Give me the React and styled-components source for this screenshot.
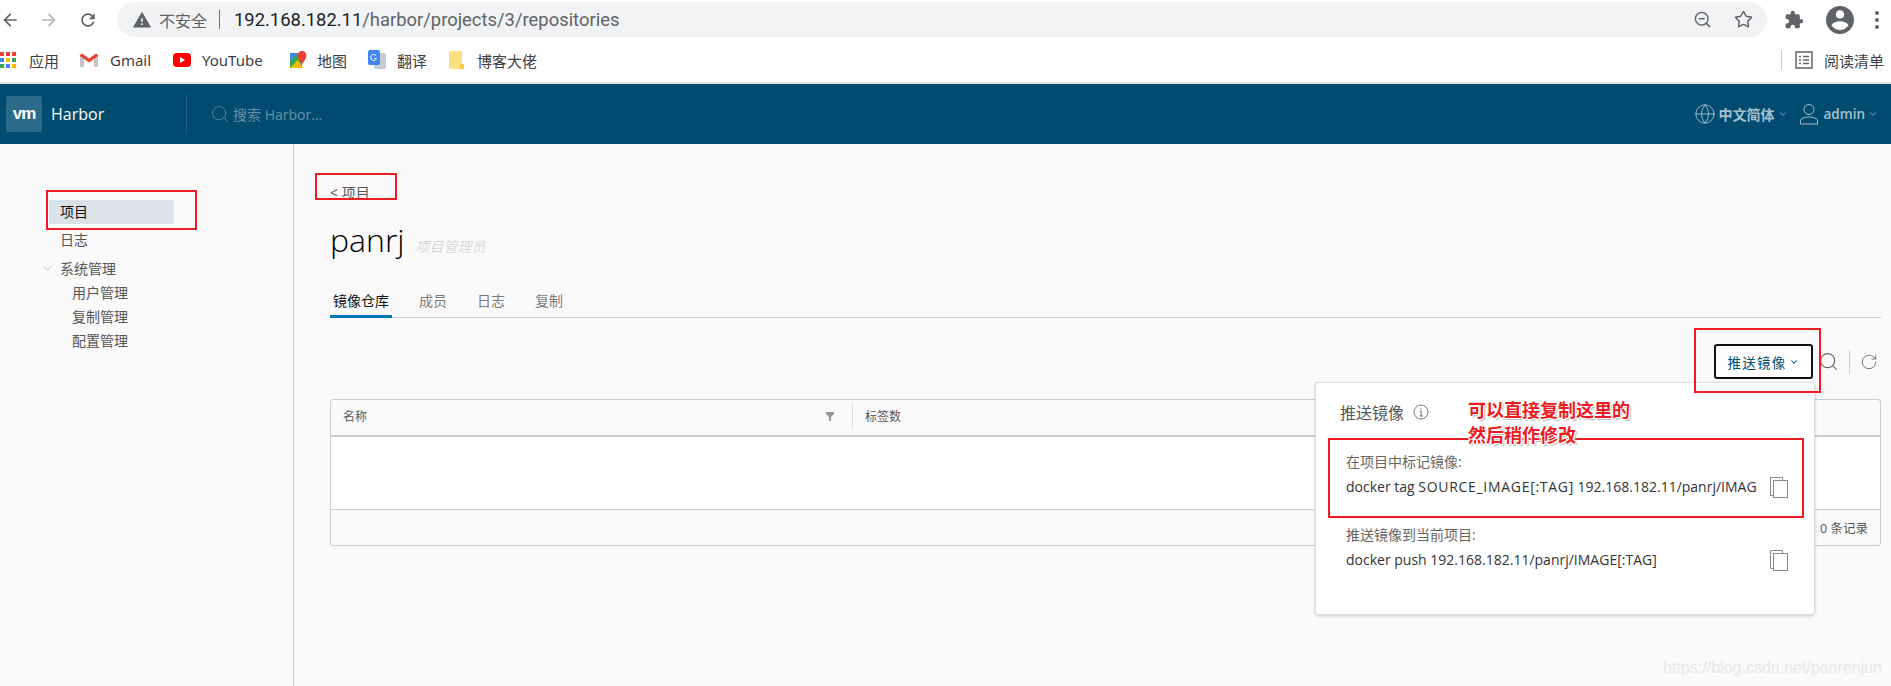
import styled, { createGlobalStyle } from "styled-components";
import { Search, RotateCw, ChevronDown, Globe, ZoomOut, Star } from "lucide-react";

const CJK = `"Noto Sans CJK SC", sans-serif`;

const GlobalStyle = createGlobalStyle`
  html, body { margin: 0; padding: 0; background: #fafafa; }
  * { box-sizing: border-box; }
  body { font-family: "Open Sans", ${CJK}; }
`;

const Page = styled.div`
  position: relative;
  width: 1891px;
  height: 686px;
  overflow: hidden;
  display: flex;
  flex-direction: column;
  background: #fafafa;
`;

/* browser chrome */
const Toolbar = styled.div`
  height: 40px;
  display: flex;
  align-items: center;
  background: #fff;
  color: #5f6368;
`;
const NavIcons = styled.div`
  width: 117px;
  display: flex;
  align-items: center;
  gap: 19px;
`;
const NavIcon = styled.svg`
  width: 20px;
  height: 20px;
  fill: ${(p) => (p.$off ? "#b4b7bb" : "#5f6368")};
  flex: none;
`;
const AddressBar = styled.div`
  width: 1650px;
  height: 35px;
  margin-top: -1px;
  border-radius: 18px;
  background: #f1f3f4;
  display: flex;
  align-items: center;
  padding: 0 14px 0 15px;
`;
const Insecure = styled.span`
  margin-left: 7px;
  font-size: 16px;
  color: #5f6368;
  font-family: "Noto Sans", ${CJK};
`;
const AddrDivider = styled.span`
  width: 1px;
  height: 19px;
  background: #6b6f73;
  margin: 0 14px 0 12px;
`;
const Host = styled.span`
  font-family: "Roboto", sans-serif;
  font-size: 18.4px;
  color: #202124;
`;
const Path = styled.span`
  font-family: "Roboto", sans-serif;
  font-size: 18.4px;
  color: #5f6368;
`;
const AddrEnd = styled.div`
  margin-left: auto;
  display: flex;
  align-items: center;
  gap: 22px;
  color: #5f6368;
`;
const ExtIcons = styled.div`
  flex: 1;
  display: flex;
  align-items: center;
  justify-content: space-between;
  padding: 0 12px 0 17px;
`;

const Bookmarks = styled.div`
  height: 44px;
  background: #fff;
  border-bottom: 2px solid #dee1e6;
  display: flex;
  align-items: center;
  padding-bottom: 2px;
`;
const Mark = styled.div`
  display: flex;
  align-items: center;
  gap: ${(p) => p.$gap || 10}px;
  width: ${(p) => p.$w}px;
  font-size: 15px;
  color: #3c4043;
  font-family: "Noto Sans", ${CJK};
  white-space: nowrap;
  flex: none;
`;
const MarkSep = styled.span`
  width: 1px;
  height: 20px;
  background: #ccc;
  margin-left: auto;
`;
const Reader = styled.div`
  width: 109px;
  padding-left: 13px;
  display: flex;
  align-items: center;
  gap: 11px;
  font-size: 15px;
  color: #3c4043;
  font-family: "Noto Sans", ${CJK};
  white-space: nowrap;
`;

/* harbor header */
const Header = styled.header`
  height: 60px;
  background: #004c70;
  display: flex;
  align-items: center;
  flex: none;
`;
const Brand = styled.div`
  width: 187px;
  height: 40px;
  border-right: 1px solid #1f6383;
  display: flex;
  align-items: center;
  padding-left: 6px;
  color: #fff;
`;
const VmLogo = styled.div`
  width: 36px;
  height: 36px;
  border-radius: 2px;
  background: #2a6a89;
  color: #fff;
  font: 700 17px/36px "Liberation Sans", sans-serif;
  letter-spacing: -1px;
  text-align: center;
`;
const BrandName = styled.span`
  margin-left: 9px;
  font-size: 16px;
`;
const HeaderSearch = styled.div`
  display: flex;
  align-items: center;
  gap: 3px;
  margin-left: 23px;
  color: #8aa9b8;
  font-size: 14px;
  opacity: 0.75;
`;
const HeaderRight = styled.div`
  margin-left: auto;
  display: flex;
  align-items: center;
  color: #a6c0cc;
  font-size: 14px;
  font-weight: 600;
  padding-right: 13px;
`;
const HeaderItem = styled.div`
  display: flex;
  align-items: center;
  gap: 3px;
  margin-left: ${(p) => p.$ml || 0}px;
`;
const UserName = styled.span`
  margin-left: 2px;
  font-size: 13.5px;
`;

/* layout */
const Body = styled.div`
  flex: 1;
  display: flex;
  min-height: 0;
`;
const Sidebar = styled.nav`
  width: 294px;
  flex: none;
  border-right: 1px solid #ccc;
  padding: 56px 0 0 49px;
  font-size: 14px;
`;
const NavItem = styled.div`
  position: relative;
  width: 125px;
  height: 24px;
  line-height: 24px;
  margin-bottom: ${(p) => p.$mb}px;
  padding-left: ${(p) => (p.$child ? 23 : 11)}px;
  color: ${(p) => (p.$active ? "#111" : "#565656")};
  background: ${(p) => (p.$active ? "#d9e4ea" : "transparent")};
`;
const NavCaret = styled.span`
  position: absolute;
  left: -8px;
  top: 5px;
  color: #999;
  display: flex;
`;

const Content = styled.main`
  flex: 1;
  min-width: 0;
  padding: 39px 10px 0 36px;
`;
const BackLink = styled.div`
  height: 20px;
  line-height: 20px;
  font-size: 14px;
  color: #565656;
`;
const TitleRow = styled.div`
  display: flex;
  align-items: baseline;
  margin-top: 15px;
  height: 44px;
`;
const Title = styled.h1`
  margin: 0;
  font: 300 32px/44px "Open Sans", sans-serif;
  color: #000;
`;
const Role = styled.span`
  margin-left: 11px;
  font-size: 14px;
  font-style: italic;
  font-weight: 300;
  color: #ccc;
`;
const Tabs = styled.div`
  margin-top: 23px;
  height: 33px;
  border-bottom: 1px solid #ccc;
  display: flex;
`;
const Tab = styled.div`
  height: 33px;
  padding: 6px 3px 0;
  margin-right: 24px;
  font-size: 14px;
  line-height: 19px;
  color: ${(p) => (p.$active ? "#111" : "#7a7a7a")};
  border-bottom: ${(p) => (p.$active ? "3px solid #0077b8" : "none")};
`;
const Actions = styled.div`
  margin-top: 26px;
  height: 35px;
  display: flex;
  align-items: center;
  justify-content: flex-end;
  padding-right: 3px;
  color: #666;
`;
const PushWrap = styled.div`
  position: relative;
  margin-right: 5px;
`;
const PushButton = styled.button`
  width: 99px;
  height: 35px;
  border: 2px solid #111;
  border-radius: 3px;
  background: #fff;
  color: #004c70;
  font-family: inherit;
  font-size: 13.5px;
  letter-spacing: 1.2px;
  display: flex;
  align-items: center;
  justify-content: center;
  gap: 3px;
  padding: 0;
`;
const ActionSep = styled.span`
  width: 1px;
  height: 24px;
  background: #ccc;
  margin: 0 10px;
`;
const Popover = styled.div`
  position: absolute;
  z-index: 2;
  top: 38px;
  right: -2px;
  width: 500px;
  height: 233px;
  background: #fff;
  border: 1px solid #ddd;
  border-radius: 3px;
  box-shadow: 0 1px 3px rgba(0, 0, 0, 0.2);
  padding: 17px 0 0 24px;
  text-align: left;
`;
const PopTitle = styled.div`
  display: flex;
  align-items: center;
  gap: 9px;
  height: 24px;
  font-size: 16px;
  color: #565656;
`;
const CmdBlock = styled.div`
  margin-top: ${(p) => p.$mt}px;
  padding-left: 6px;
  position: relative;
`;
const CmdLabel = styled.div`
  font-size: 14px;
  line-height: 18px;
  color: #666;
`;
const CmdText = styled.div`
  width: 411px;
  margin-top: 7px;
  font-size: 14px;
  line-height: 18px;
  color: #333;
  white-space: nowrap;
  overflow: hidden;
`;
const CmdCaps = styled.span`
  letter-spacing: 0.7px;
`;
const CopyIcon = styled.svg`
  position: absolute;
  left: 429px;
  top: 23px;
  width: 20px;
  height: 22px;
  fill: none;
  stroke: #8a8a8a;
`;

const Grid = styled.div`
  margin-top: 20px;
  height: 147px;
  border: 1px solid #ccc;
  border-radius: 3px;
  background: #fafafa;
  display: flex;
  flex-direction: column;
`;
const GridHead = styled.div`
  height: 37px;
  padding-bottom: 2px;
  border-bottom: 2px solid #ccc;
  display: flex;
  align-items: center;
  font-size: 12px;
  color: #565656;
  flex: none;
`;
const HeadCell = styled.div`
  width: ${(p) => p.$w}px;
  height: 25px;
  line-height: 25px;
  padding-left: 12px;
  display: flex;
  justify-content: space-between;
  align-items: center;
  flex: none;
`;
const HeadDivider = styled(HeadCell)`
  border-right: 1px solid #ddd;
  padding-right: 18px;
`;
const GridBody = styled.div`
  height: 72px;
  background: #fff;
  flex: none;
`;
const GridFoot = styled.div`
  flex: 1;
  border-top: 1px solid #ccc;
  display: flex;
  align-items: center;
  justify-content: flex-end;
  padding-right: 12px;
  font-size: 12.5px;
  color: #565656;
`;

/* annotations drawn over the shot */
const RedBox = styled.div`
  position: absolute;
  left: ${(p) => p.$x}px;
  top: ${(p) => p.$y}px;
  width: ${(p) => p.$w}px;
  height: ${(p) => p.$h}px;
  border: 2px solid #ed1c24;
  z-index: 3;
  pointer-events: none;
`;
const RedNote = styled.div`
  position: absolute;
  left: 1468px;
  top: 397px;
  z-index: 4;
  font: 700 18px/25px ${CJK};
  color: #ed1c24;
  text-shadow: 1px 1px 0 #fff, -1px -1px 0 #fff, 1px -1px 0 #fff, -1px 1px 0 #fff, 2px 2px 1px #bbb;
`;
const Watermark = styled.div`
  position: absolute;
  right: 9px;
  top: 659px;
  font: 16px/18px "Liberation Sans", sans-serif;
  color: #e8e8e8;
`;

const Copy = () => (
  <CopyIcon viewBox="0 0 20 22">
    <path d="M4.5 19.5H1.5V1.5H13.5V4" />
    <rect x="4.5" y="4.5" width="14" height="17" />
  </CopyIcon>
);

const appColors = ["#ea4335", "#ea4335", "#ea4335", "#4285f4", "#fbbc04", "#34a853", "#34a853", "#4285f4", "#fbbc04"];

const Apps = () => (
  <svg width="16" height="16" viewBox="0 0 16 16">
    {appColors.map((c, i) => (
      <rect key={i} x={(i % 3) * 6} y={Math.floor(i / 3) * 6} width="4" height="4" fill={c} />
    ))}
  </svg>
);

export default function App() {
  return (
    <Page>
      <GlobalStyle />
      <Toolbar>
        <NavIcons>
          <NavIcon viewBox="0 0 24 24"><path d="M20 11H7.83l5.59-5.59L12 4l-8 8 8 8 1.41-1.41L7.83 13H20v-2z" /></NavIcon>
          <NavIcon $off viewBox="0 0 24 24"><path d="M12 4l-1.41 1.41L16.17 11H4v2h12.17l-5.58 5.59L12 20l8-8z" /></NavIcon>
          <NavIcon viewBox="0 0 24 24"><path d="M17.65 6.35C16.2 4.9 14.21 4 12 4c-4.42 0-7.99 3.58-7.99 8s3.57 8 7.99 8c3.73 0 6.84-2.55 7.73-6h-2.08c-.82 2.33-3.04 4-5.65 4-3.31 0-6-2.69-6-6s2.69-6 6-6c1.66 0 3.14.69 4.22 1.78L13 11h7V4l-2.35 2.35z" /></NavIcon>
        </NavIcons>
        <AddressBar>
          <NavIcon viewBox="0 0 24 24"><path d="M1 21h22L12 2 1 21zm12-3h-2v-2h2v2zm0-4h-2v-4h2v4z" /></NavIcon>
          <Insecure>不安全</Insecure>
          <AddrDivider />
          <Host>192.168.182.11</Host>
          <Path>/harbor/projects/3/repositories</Path>
          <AddrEnd>
            <ZoomOut size={19} strokeWidth={1.8} />
            <Star size={19} strokeWidth={1.8} />
          </AddrEnd>
        </AddressBar>
        <ExtIcons>
          <NavIcon viewBox="0 0 24 24"><path d="M20.5 11H19V7c0-1.1-.9-2-2-2h-4V3.5C13 2.12 11.88 1 10.5 1S8 2.12 8 3.5V5H4c-1.1 0-1.99.9-1.99 2v3.8H3.5c1.49 0 2.7 1.21 2.7 2.7s-1.21 2.7-2.7 2.7H2V20c0 1.1.9 2 2 2h3.8v-1.5c0-1.49 1.21-2.7 2.7-2.7 1.49 0 2.7 1.21 2.7 2.7V22H17c1.1 0 2-.9 2-2v-4h1.5c1.38 0 2.5-1.12 2.5-2.5S21.88 11 20.5 11z" /></NavIcon>
          <svg width="28" height="28" viewBox="2 2 20 20" fill="#5f6368"><path d="M12 2C6.48 2 2 6.48 2 12s4.48 10 10 10 10-4.48 10-10S17.52 2 12 2zm0 3c1.66 0 3 1.34 3 3s-1.34 3-3 3-3-1.34-3-3 1.34-3 3-3zm0 14.2c-2.5 0-4.71-1.28-6-3.22.03-1.99 4-3.08 6-3.08 1.99 0 5.97 1.09 6 3.08-1.29 1.94-3.5 3.22-6 3.22z" /></svg>
          <svg width="4" height="18" viewBox="0 0 4 18" fill="#5f6368"><circle cx="2" cy="2" r="2" /><circle cx="2" cy="9" r="2" /><circle cx="2" cy="16" r="2" /></svg>
        </ExtIcons>
      </Toolbar>

      <Bookmarks>
        <Mark $w={80} $gap={13}><Apps />应用</Mark>
        <Mark $w={93} $gap={12}>
          <svg width="18" height="14" viewBox="0 0 18 14">
            <path d="M0 2v12h3.5V5.5L9 9.5l5.5-4V14H18V2l-2-1.6L9 5.5 2 .4z" fill="#ea4335" />
            <path d="M0 14h3.5V5.5L0 3zM14.5 14H18V3l-3.5 2.5z" fill="#c5c5c5" />
          </svg>
          Gmail
        </Mark>
        <Mark $w={116} $gap={11}>
          <svg width="18" height="14" viewBox="0 0 18 14">
            <rect width="18" height="14" rx="4" fill="#f00" />
            <path d="M7 4l5 3-5 3z" fill="#fff" />
          </svg>
          YouTube
        </Mark>
        <Mark $w={79} $gap={10}>
          <svg width="18" height="18" viewBox="0 0 18 18">
            <path d="M1 2h12v15H1z" fill="#34a853" />
            <path d="M1 17l8-8 5 8z" fill="#fbbc04" />
            <path d="M1 2h8L1 10z" fill="#4285f4" />
            <path d="M13 0a4.5 4.5 0 0 1 4.5 4.5C17.5 8 13 13 13 13S8.5 8 8.5 4.5A4.5 4.5 0 0 1 13 0z" fill="#ea4335" />
          </svg>
          地图
        </Mark>
        <Mark $w={81} $gap={11}>
          <svg width="18" height="20" viewBox="0 0 18 20">
            <rect x="6" y="3" width="12" height="16" rx="2" fill="#c8cdd3" />
            <rect width="12" height="15" rx="2" fill="#4285f4" />
            <path d="M8 5.5a3 3 0 1 0 .5 3H6" stroke="#fff" fill="none" />
          </svg>
          翻译
        </Mark>
        <Mark $w={100} $gap={13}>
          <svg width="15" height="18" viewBox="0 0 15 18">
            <path d="M0 1a1 1 0 0 1 1-1h12v17a1 1 0 0 1-1 1H1a1 1 0 0 1-1-1z" fill="#fcdf7e" />
            <path d="M11 13h4v5h-4z" fill="#f5c842" />
          </svg>
          博客大佬
        </Mark>
        <MarkSep />
        <Reader>
          <svg width="18" height="18" viewBox="0 0 18 18" fill="none" stroke="#5f6368" strokeWidth="1.5">
            <rect x="1" y="1" width="16" height="16" />
            <path d="M4 5.5h2M8 5.5h6M4 9h2M8 9h6M4 12.5h2M8 12.5h6" />
          </svg>
          阅读清单
        </Reader>
      </Bookmarks>

      <Header>
        <Brand>
          <VmLogo>vm</VmLogo>
          <BrandName>Harbor</BrandName>
        </Brand>
        <HeaderSearch>
          <Search size={20} strokeWidth={1} />
          搜索 Harbor...
        </HeaderSearch>
        <HeaderRight>
          <HeaderItem>
            <Globe size={22} strokeWidth={1} />
            中文简体
            <ChevronDown size={10} />
          </HeaderItem>
          <HeaderItem $ml={11}>
            <svg width="20" height="22" viewBox="0 0 20 22" fill="none" stroke="currentColor">
              <circle cx="10" cy="6.5" r="5" />
              <path d="M1.5 21v-3.5c0-2 4-3.5 8.5-3.5s8.5 1.5 8.5 3.5V21z" />
            </svg>
            <UserName>admin</UserName>
            <ChevronDown size={10} />
          </HeaderItem>
        </HeaderRight>
      </Header>

      <Body>
        <Sidebar>
          <NavItem $active $mb={4}>项目</NavItem>
          <NavItem $mb={5}>日志</NavItem>
          <NavItem $mb={0}>
            <NavCaret><ChevronDown size={13} strokeWidth={1.2} /></NavCaret>
            系统管理
          </NavItem>
          <NavItem $child $mb={0}>用户管理</NavItem>
          <NavItem $child $mb={0}>复制管理</NavItem>
          <NavItem $child $mb={0}>配置管理</NavItem>
        </Sidebar>
        <Content>
          <BackLink>&lt; 项目</BackLink>
          <TitleRow>
            <Title>panrj</Title>
            <Role>项目管理员</Role>
          </TitleRow>
          <Tabs>
            <Tab $active>镜像仓库</Tab>
            <Tab>成员</Tab>
            <Tab>日志</Tab>
            <Tab>复制</Tab>
          </Tabs>
          <Actions>
            <PushWrap>
              <PushButton>推送镜像<ChevronDown size={10} strokeWidth={2.5} /></PushButton>
              <Popover>
                <PopTitle>
                  推送镜像
                  <svg width="16" height="16" viewBox="0 0 16 16" fill="none" stroke="#777">
                    <circle cx="8" cy="8" r="7" />
                    <path d="M6.5 7H8.2V12M6.5 12H10M8 4v1.5" />
                  </svg>
                </PopTitle>
                <CmdBlock $mt={29}>
                  <CmdLabel>在项目中标记镜像:</CmdLabel>
                  <CmdText>docker tag <CmdCaps>SOURCE_IMAGE[:TAG]</CmdCaps> 192.168.182.11/panrj/IMAGE[:TAG]</CmdText>
                  <Copy />
                </CmdBlock>
                <CmdBlock $mt={30}>
                  <CmdLabel>推送镜像到当前项目:</CmdLabel>
                  <CmdText>docker push 192.168.182.11/panrj/IMAGE[:TAG]</CmdText>
                  <Copy />
                </CmdBlock>
              </Popover>
            </PushWrap>
            <Search size={21} strokeWidth={1.2} />
            <ActionSep />
            <RotateCw size={18} strokeWidth={1.2} />
          </Actions>
          <Grid>
            <GridHead>
              <HeadDivider $w={522}>
                名称
                <svg width="8" height="9" viewBox="0 0 8 9" fill="#999"><path d="M0 0h8v2L5 5v4H3V5L0 2z" /></svg>
              </HeadDivider>
              <HeadCell $w={200}>标签数</HeadCell>
            </GridHead>
            <GridBody />
            <GridFoot>0 条记录</GridFoot>
          </Grid>
        </Content>
      </Body>

      <RedBox $x={46} $y={190} $w={151} $h={40} />
      <RedBox $x={315} $y={173} $w={82} $h={27} />
      <RedBox $x={1694} $y={328} $w={127} $h={65} />
      <RedBox $x={1328} $y={438} $w={476} $h={80} />
      <RedNote>
        可以直接复制这里的
        <br />
        然后稍作修改
      </RedNote>
      <Watermark>https://blog.csdn.net/panrenjun</Watermark>
    </Page>
  );
}
